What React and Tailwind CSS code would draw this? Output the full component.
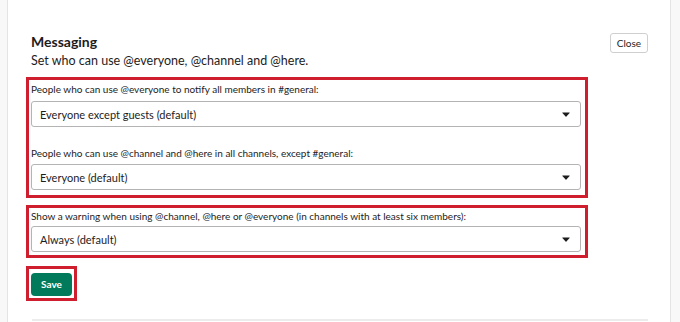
const Caret = () => (
  <svg width="8" height="5" viewBox="0 0 8 5" className="shrink-0">
    <path d="M0.6 0.4 H7.4 Q8 0.4 7.6 0.9 L4.4 4.5 Q4 4.9 3.6 4.5 L0.4 0.9 Q0 0.4 0.6 0.4 Z" fill="#1d1c1d" />
  </svg>
);

const Select = ({ value, className = "" }) => (
  <div
    className={`flex h-[26px] w-[550px] items-center justify-between rounded-[3px] border border-[#b4b4b4] bg-white pl-[8px] pr-[10px] ${className}`}
  >
    <span className="text-[11px] leading-none text-[#1d1c1d]">{value}</span>
    <Caret />
  </div>
);

const Label = ({ children, className = "" }) => (
  <div className={`text-[10px] leading-[16px] text-[#1d1c1d] ${className}`}>{children}</div>
);

export default function App() {
  return (
    <div className="flex h-[322px] w-[680px] overflow-hidden bg-white font-['Lato',sans-serif] text-[#1d1c1d]">
      {/* left rail */}
      <div className="w-[8px] shrink-0 border-r border-[#e4e4e4] bg-[#f8f8f8]" />

      {/* Main panel */}
      <div className="flex-1 pl-[23px] pr-[22px]">
        <div className="flex items-start pt-[32px]">
          <div>
            <h2 className="text-[14px] font-bold leading-[20px]">Messaging</h2>
            <p className="text-[12.5px] leading-[18px]">
              Set who can use @everyone, @channel and @here.
            </p>
          </div>
          <button className="ml-auto mt-[1px] h-[20px] w-[38px] rounded-[3px] border border-[#cfcfcf] bg-white text-[10px] leading-none text-[#1d1c1d]">
            Close
          </button>
        </div>

        {/* first group */}
        <div className="-ml-[5px] mt-[7px] w-[562px] border-[3px] border-[#cf1f2e] pb-[5px] pl-[2px] pr-[4px] pt-[1px]">
          <Label>People who can use @everyone to notify all members in #general:</Label>
          <Select className="mt-[4px]" value="Everyone except guests (default)" />
          <Label className="mt-[18px]">
            People who can use @channel and @here in all channels, except #general:
          </Label>
          <Select className="mt-[3px]" value="Everyone (default)" />
        </div>

        {/* warning group */}
        <div className="-ml-[5px] mt-[7px] w-[562px] border-[3px] border-[#cf1f2e] pb-[3px] pl-[2px] pr-[4px]">
          <Label>
            Show a warning when using @channel, @here or @everyone (in channels with at least six members):
          </Label>
          <Select className="mt-[2px]" value="Always (default)" />
        </div>

        <div className="-ml-[5px] mt-[8px] w-fit border-[3px] border-[#cf1f2e] px-[2px] pb-[2px] pt-[1px]">
          <button className="h-[23px] w-[41px] rounded-[4px] bg-[#007a5a] text-[10px] font-bold leading-none text-white">
            Save
          </button>
        </div>

        <div className="ml-[1px] mt-[18px] h-[2px] bg-[#ececec]" />
      </div>

      {/* right rail */}
      <div className="w-[10px] shrink-0 border-l border-[#e4e4e4] bg-[#f8f8f8]" />
    </div>
  );
}
